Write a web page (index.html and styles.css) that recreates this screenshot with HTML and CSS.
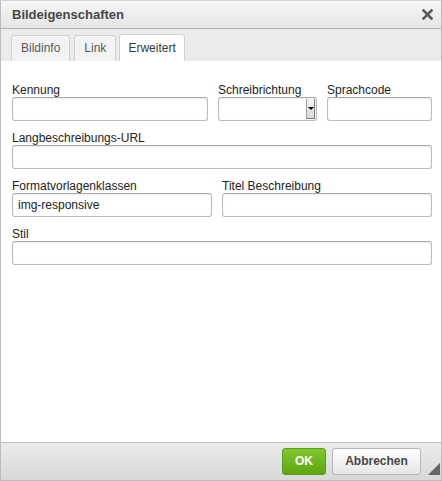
FILE: index.html
```html
<!DOCTYPE html>
<html lang="de">
<head>
    <meta charset="UTF-8">
    <title>Bildeigenschaften</title>
    <link rel="stylesheet" href="styles.css">
</head>
<body>
    <div class="dialog">
        <div class="title">
            <span>Bildeigenschaften</span>
            <svg class="close" width="11" height="11" viewBox="0 0 11 11">
                <path d="M1.5 1.5 L9.5 9.5 M9.5 1.5 L1.5 9.5" stroke="#5a5a5a" stroke-width="2.6" stroke-linecap="square"/>
            </svg>
        </div>
        <div class="tabs">
            <div class="tab">Bildinfo</div>
            <div class="tab">Link</div>
            <div class="tab active">Erweitert</div>
        </div>
        <div class="content">
            <div class="row row1">
                <div class="field">
                    <label>Kennung</label>
                    <div class="input"></div>
                </div>
                <div class="field">
                    <label>Schreibrichtung</label>
                    <div class="input select"><span class="arrow"></span></div>
                </div>
                <div class="field">
                    <label>Sprachcode</label>
                    <div class="input"></div>
                </div>
            </div>
            <div class="row">
                <div class="field">
                    <label>Langbeschreibungs-URL</label>
                    <div class="input"></div>
                </div>
            </div>
            <div class="row row3">
                <div class="field">
                    <label>Formatvorlagenklassen</label>
                    <div class="input">img-responsive</div>
                </div>
                <div class="field">
                    <label>Titel Beschreibung</label>
                    <div class="input"></div>
                </div>
            </div>
            <div class="row">
                <div class="field">
                    <label>Stil</label>
                    <div class="input"></div>
                </div>
            </div>
        </div>
        <div class="footer">
            <div class="btn ok">OK</div>
            <div class="btn cancel">Abbrechen</div>
            <svg class="grip" width="12" height="12" viewBox="0 0 12 12">
                <polygon points="12,0 12,12 0,12" fill="#666"/>
            </svg>
        </div>
    </div>
</body>
</html>
```
FILE: styles.css
```css
body{
    margin: 0;
    font-family: "Liberation Sans", Arial, sans-serif;
    font-size: 12px;
    color: #333;
}
.dialog{
    width: 442px;
    height: 481px;
    box-sizing: border-box;
    border: 1px solid #bcbcbc;
    border-top-color: #d4d4d4;
    display: flex;
    flex-direction: column;
    background: #fff;
}
.title{
    height: 27px;
    padding: 0 8px 0 11px;
    display: flex;
    align-items: center;
    justify-content: space-between;
    font-weight: bold;
    font-size: 13px;
    color: #474747;
    background: linear-gradient(#f6f6f6, #e5e5e5);
    border-bottom: 1px solid #b2b2b2;
}
.tabs{
    height: 32px;
    background: #ebebeb;
    display: flex;
    align-items: flex-end;
    padding-left: 10px;
    gap: 4px;
}
.tab{
    height: 25px;
    line-height: 25px;
    padding: 0 9px;
    border: 1px solid #d1d1d1;
    border-bottom: none;
    border-radius: 3px 3px 0 0;
    background: #f3f3f3;
    color: #595959;
}
.tab.active{
    height: 26px;
    line-height: 27px;
    padding: 0 8px;
    background: #fff;
    color: #383838;
    margin-left: -1px;
}
.content{
    flex: 1;
    padding: 20px 9px 0 11px;
}
.row{
    display: grid;
    grid-template-columns: 1fr;
    margin-bottom: 8px;
}
.row1{
    grid-template-columns: 196px 99px 1fr;
    column-gap: 10px;
}
.row3{
    grid-template-columns: 200px 1fr;
    column-gap: 10px;
}
.field label{
    display: block;
    height: 16px;
    line-height: 18px;
    color: #222;
}
.input{
    height: 24px;
    box-sizing: border-box;
    border: 1px solid #bcbcbc;
    border-top-color: #a8a8a8;
    border-radius: 3px;
    box-shadow: inset 0 1px 2px rgba(0,0,0,0.08);
    padding: 0 5px;
    line-height: 22px;
    color: #222;
}
.select{
    position: relative;
}
.select .arrow{
    position: absolute;
    right: 1px;
    top: 1px;
    width: 9px;
    height: 20px;
    background: linear-gradient(#f4f4f4, #d8d8d8);
    border-left: 1px solid #9a9a9a;
    border-right: 1px solid #7a7a7a;
    border-bottom: 1px solid #7a7a7a;
    box-sizing: border-box;
}
.select .arrow::after{
    content: "";
    position: absolute;
    left: 1px;
    top: 8px;
    border-left: 3px solid transparent;
    border-right: 3px solid transparent;
    border-top: 3px solid #000;
}
.footer{
    height: 38px;
    border-top: 1px solid #bfbfbf;
    background: linear-gradient(#ebebeb, #d9d9d9);
    display: flex;
    align-items: flex-start;
    justify-content: flex-end;
    padding: 5px 0 0 0;
    box-sizing: border-box;
    gap: 6px;
}
.btn{
    height: 27px;
    box-sizing: border-box;
    line-height: 25px;
    border-radius: 3px;
    font-weight: bold;
    text-align: center;
}
.ok{
    width: 44px;
    color: #fff;
    background: linear-gradient(#7fc72d, #5fa611);
    border: 1px solid #5b9e17;
}
.cancel{
    width: 89px;
    color: #474747;
    background: linear-gradient(#fff, #e6e6e6);
    border: 1px solid #b6b6b6;
}
.grip{
    align-self: flex-end;
    margin: 0 1px 5px 1px;
}
```
